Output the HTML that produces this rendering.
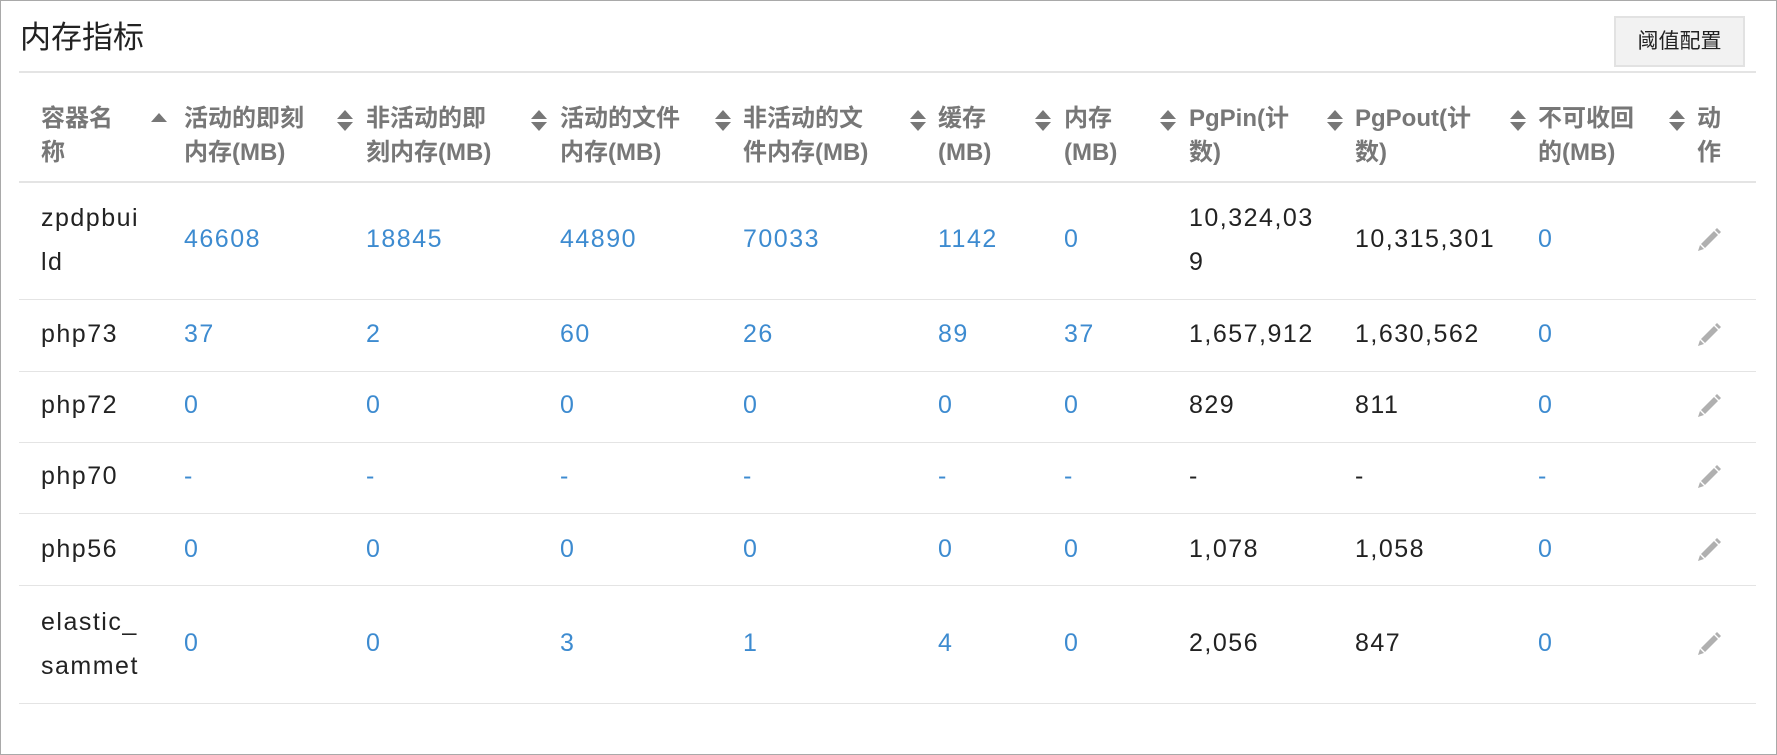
<!DOCTYPE html>
<html><head><meta charset="utf-8"><style>
*{margin:0;padding:0;box-sizing:border-box}
body{width:1777px;height:755px;background:#fff;position:relative;overflow:hidden;font-family:"Liberation Sans","Noto Sans CJK SC",sans-serif}
.frame{position:absolute;left:0;top:0;width:1777px;height:755px;border:1px solid #a9a9a9}
.a{position:absolute;white-space:nowrap}
.h{font-size:24px;font-weight:bold;color:#777;line-height:34px}
.d{font-size:25px;line-height:44px;color:#222;letter-spacing:1.5px}
.b{color:#3d8bd0}
.ln{position:absolute;left:19px;width:1737px;height:1px;background:#e4e4e4}
.s{position:absolute;width:16px}
.s:before,.s:after{content:"";position:absolute;left:0;border-left:8px solid transparent;border-right:8px solid transparent}
.s:before{top:0;border-bottom:9px solid #777}
.s:after{top:12px;border-top:9px solid #777}
.up:after{display:none}
</style></head><body>
<div class="frame"></div>
<div class="a" style="left:20px;top:18px;font-size:31px;color:#222;line-height:40px">内存指标</div>
<div class="a" style="left:1614px;top:16px;width:131px;height:51px;background:#f2f2f2;border:2px solid #e2e2e2;font-size:21px;line-height:47px;text-align:center;color:#222">阈值配置</div>
<div class="ln" style="top:71px;height:2px"></div>

<div class="a h" style="left:41px;top:102px">容器名<br>称</div>
<div class="a h" style="left:184px;top:102px">活动的即刻<br>内存(MB)</div>
<div class="a h" style="left:366px;top:102px">非活动的即<br>刻内存(MB)</div>
<div class="a h" style="left:560px;top:102px">活动的文件<br>内存(MB)</div>
<div class="a h" style="left:743px;top:102px">非活动的文<br>件内存(MB)</div>
<div class="a h" style="left:938px;top:102px">缓存<br>(MB)</div>
<div class="a h" style="left:1064px;top:102px">内存<br>(MB)</div>
<div class="a h" style="left:1189px;top:102px">PgPin(计<br>数)</div>
<div class="a h" style="left:1355px;top:102px">PgPout(计<br>数)</div>
<div class="a h" style="left:1538px;top:102px">不可收回<br>的(MB)</div>
<div class="a h" style="left:1697px;top:102px">动<br>作</div>

<div class="s up" style="left:151px;top:113px"></div>
<div class="s" style="left:337px;top:110px"></div>
<div class="s" style="left:531px;top:110px"></div>
<div class="s" style="left:715px;top:110px"></div>
<div class="s" style="left:910px;top:110px"></div>
<div class="s" style="left:1035px;top:110px"></div>
<div class="s" style="left:1160px;top:110px"></div>
<div class="s" style="left:1327px;top:110px"></div>
<div class="s" style="left:1510px;top:110px"></div>
<div class="s" style="left:1669px;top:110px"></div>

<div class="ln" style="top:181px;height:2px"></div>
<div class="ln" style="top:299px"></div>
<div class="ln" style="top:371px"></div>
<div class="ln" style="top:442px"></div>
<div class="ln" style="top:513px"></div>
<div class="ln" style="top:585px"></div>
<div class="ln" style="top:703px"></div>

<div class="a d" style="left:41px;top:196px">zpdpbui<br>ld</div>
<div class="a d" style="left:1189px;top:196px">10,324,03<br>9</div>
<div class="a d" style="left:41px;top:600px">elastic_<br>sammet</div>

<div id="rows"></div>
<script>
var cols=[184,366,560,743,938,1064,1189,1355,1538];
var rows=[
[239,null,["46608","18845","44890","70033","1142","0",null,"10,315,301","0"]],
[334,"php73",["37","2","60","26","89","37","1,657,912","1,630,562","0"]],
[405,"php72",["0","0","0","0","0","0","829","811","0"]],
[476,"php70",["-","-","-","-","-","-","-","-","-"]],
[549,"php56",["0","0","0","0","0","0","1,078","1,058","0"]],
[643,null,["0","0","3","1","4","0","2,056","847","0"]]];
var h="";
rows.forEach(function(r){
 var t=r[0]-22;
 if(r[1])h+='<div class="a d" style="left:41px;top:'+t+'px">'+r[1]+'</div>';
 r[2].forEach(function(v,i){ if(v===null)return;
  var blue=(i<6||i==8);
  h+='<div class="a d'+(blue?' b':'')+'" style="left:'+cols[i]+'px;top:'+t+'px">'+v+'</div>';});
 h+='<svg class="a" style="left:1697px;top:'+(r[0]-13)+'px" width="26" height="26" viewBox="0 0 26 26"><path d="M20 2 L24 6 L22 8 L18 4 Z M17 5 L21 9 L8 22 L4 18 Z M3 19 L7 23 L1 25 Z" fill="#b0b0b0"/></svg>';
});
document.getElementById("rows").innerHTML=h;
</script>
</body></html>
